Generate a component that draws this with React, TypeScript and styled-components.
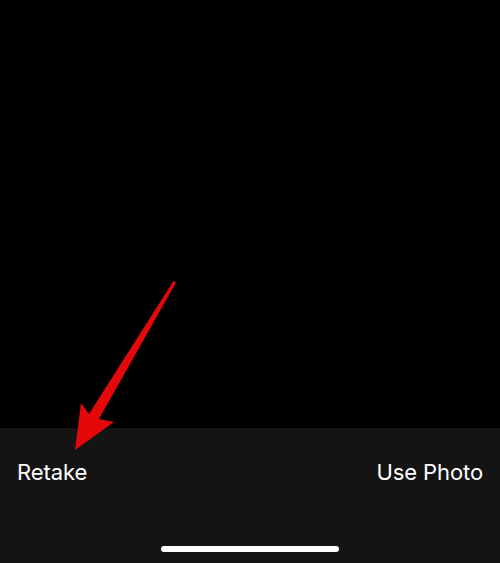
import styled, { createGlobalStyle } from 'styled-components'

const Global = createGlobalStyle`
  html, body {
    margin: 0;
    padding: 0;
    background: #000;
  }
  * { box-sizing: border-box; }
`

const Screen = styled.div`
  position: relative;
  width: 500px;
  height: 563px;
  display: flex;
  flex-direction: column;
  background: #000;
  overflow: hidden;
  font-family: Inter, "Liberation Sans", sans-serif;
`

const Viewfinder = styled.div`
  flex: 1;
  background: #000;
`

const BottomBar = styled.div`
  height: 135px;
  background: #141414;
  display: flex;
  flex-direction: column;
  justify-content: space-between;
  padding: 30px 17px 11px 17px;
`

const Actions = styled.div`
  display: flex;
  justify-content: space-between;
  align-items: center;
`

const ActionButton = styled.button`
  background: none;
  border: 0;
  padding: 0;
  color: #fff;
  font-family: inherit;
  font-size: 22px;
  font-weight: 400;
  letter-spacing: -0.1px;
  line-height: 28px;
`

const HomeIndicator = styled.div`
  align-self: center;
  width: 178px;
  height: 6px;
  border-radius: 3px;
  background: #fff;
`

const ArrowLayer = styled.svg`
  position: absolute;
  left: 0;
  top: 0;
  pointer-events: none;
`

const App = () => {
  return (
    <>
      <Global />
      <Screen>
        <Viewfinder />
        <BottomBar>
          <Actions>
            <ActionButton>Retake</ActionButton>
            <ActionButton>Use Photo</ActionButton>
          </Actions>
          <HomeIndicator />
        </BottomBar>
        <ArrowLayer width="500" height="563" viewBox="0 0 500 563">
          <polygon
            points="173.5,281 176,282.5 99,419 114,422 75,450 81,403 89,414"
            fill="#e4080a"
          />
        </ArrowLayer>
      </Screen>
    </>
  )
}

export default App
